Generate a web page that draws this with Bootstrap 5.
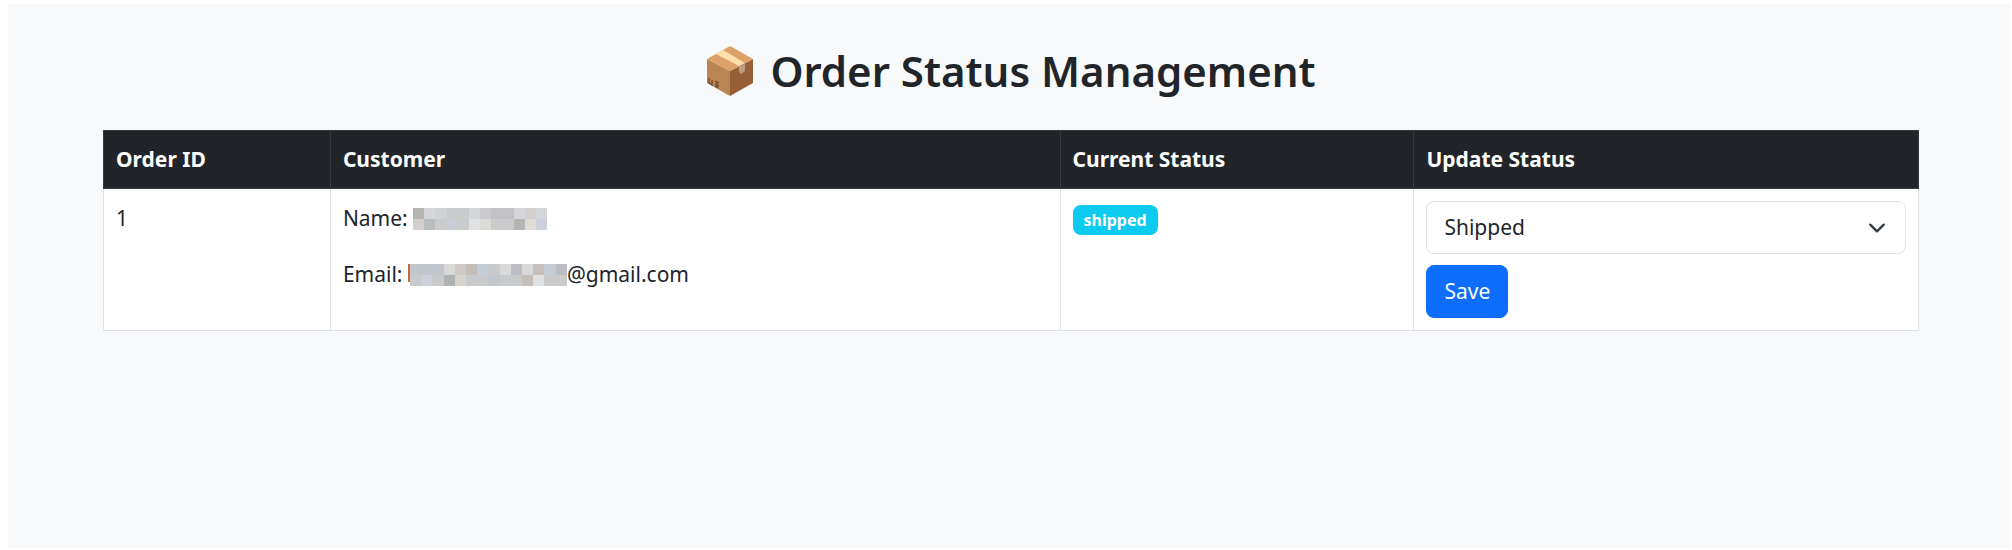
<!DOCTYPE html>
<html lang="en">
<head>
<meta charset="utf-8">
<meta name="viewport" content="width=device-width, initial-scale=1">
<title>Order Status Management</title>
<link href="https://cdn.jsdelivr.net/npm/bootstrap@5.3.0/dist/css/bootstrap.min.css" rel="stylesheet">
<style>
  body { font-family: "Noto Sans", sans-serif; font-size: 21px; line-height: 34px; background: #fff; }
  .page { margin: 4px 2px 2px 8px; padding: 40px 0 0 4px; min-height: calc(100vh - 6px); background: #f8f9fb; }
  .orders-wrap { max-width: 1850px; padding: 0 17px; }
  .page-title { font-size: 42px; line-height: 54px; font-weight: 600; gap: 16px; margin-bottom: 32px; }
  .box-icon { width: 48px; height: 50px; flex: none; }
  .orders > :not(caption) > * > * { padding: 12px; }
  .orders > thead > tr > th { padding: 11px 12px 12px; }
  .orders p { margin-bottom: 22px; }
  .col-id { width: 12.5%; }
  .col-customer { width: 40.2%; }
  .col-current { width: 19.5%; }
  .redacted { height: 22px; vertical-align: -4px; }
  .status-badge { font-size: 16px; line-height: 18px; padding: 6px 11px; border-radius: 8px; }
  .status-select { font-size: 21px; line-height: 33px; padding: 9px 50px 9px 17px; border-radius: 8px; background-size: 20px 18px; background-position: right 18px center; margin-bottom: 11px; }
  .save-btn { font-size: 21px; line-height: 33px; padding: 9px 17px; border-radius: 8px; }
</style>
</head>
<body>
<main class="page">
  <div class="orders-wrap mx-auto">
    <h2 class="page-title d-flex justify-content-center align-items-center">
      <svg class="box-icon" viewBox="0 0 48 50" aria-hidden="true">
        <path d="M1 13 24 25v25L1 37z" fill="#b98552"/>
        <path d="M24 25 47 13v24L24 50z" fill="#975f37"/>
        <path d="M24 0 47 13 24 25 1 13z" fill="#dca069"/>
        <path d="M17 4 39 17 33 20 10 8z" fill="#ffdfac"/>
        <path d="M33 20 39 17v8l-4 3-2-2z" fill="#bd9b80"/>
        <path d="M3 32v5l3 2v-5M9 35l4 2m-2-1v5m-2-3 4 2m-4 0 3 2" fill="none" stroke="#6d4b2c" stroke-width="1.3"/>
      </svg>
      <span>Order Status Management</span>
    </h2>
    <table class="table table-bordered orders bg-white mb-0">
      <thead class="table-dark">
        <tr>
          <th scope="col" class="col-id">Order ID</th>
          <th scope="col" class="col-customer">Customer</th>
          <th scope="col" class="col-current">Current Status</th>
          <th scope="col">Update Status</th>
        </tr>
      </thead>
      <tbody>
        <tr>
          <td>1</td>
          <td>
            <p>Name: <svg class="redacted" width="134" viewBox="0 0 12 2" preserveAspectRatio="none" shape-rendering="crispEdges" role="img" aria-label="Hidden name"><path fill="#cacbcc" d="M0 0h12v2H0z"/><path fill="#b5b5b4" d="M0 0h1v1H0zM9 1h1v1H9z"/><path fill="#d5d6d9" d="M1 0h1v1H1zM5 0h1v1H5zM9 0h1v1H9zM11 0h1v1h-1z"/><path fill="#d0d2d7" d="M2 0h1v1H2z"/><path fill="#c1c1c6" d="M7 0h1v1H7zM8 0h1v1H8z"/><path fill="#d3cfcd" d="M10 0h1v1h-1zM0 1h1v1H0z"/><path fill="#bcbebd" d="M1 1h1v1H1z"/><path fill="#cacdd5" d="M3 1h1v1H3z"/><path fill="#dfe1e3" d="M5 1h1v1H5z"/><path fill="#dadbd6" d="M6 1h1v1H6z"/><path fill="#e0dcd6" d="M10 1h1v1h-1z"/><path fill="#cad1dc" d="M11 1h1v1h-1z"/></svg></p>
            <p>Email: <svg class="redacted" width="159" viewBox="0 0 159 22" shape-rendering="crispEdges" role="img" aria-label="Hidden address"><path fill="#b9703c" d="M0 0h2v18H0z"/><g transform="translate(2) scale(11.2 11)"><path fill="#c9cacc" d="M0 0h14v2H0z"/><path fill="#c2c6cd" d="M0 0h3v1H0zM7 1h1v1H7z"/><path fill="#d9d9da" d="M3 0h1v1H3zM8 0h1v1H8zM10 0h1v1h-1z"/><path fill="#cfcac8" d="M4 0h1v1H4z"/><path fill="#c5bfba" d="M5 0h1v1H5zM11 0h1v1h-1zM10 1h1v1h-1z"/><path fill="#c5cdd6" d="M6 0h1v1H6zM12 0h1v1h-1z"/><path fill="#bdbec3" d="M9 0h1v1H9zM13 0h1v1h-1z"/><path fill="#cbd0da" d="M1 1h1v1H1z"/><path fill="#b1b2b4" d="M3 1h1v1H3z"/><path fill="#d7d3cd" d="M4 1h1v1H4z"/><path fill="#e0e1e3" d="M11 1h1v1h-1z"/></g></svg>@gmail.com</p>
          </td>
          <td><span class="badge bg-info status-badge">shipped</span></td>
          <td>
            <form onsubmit="return false">
              <select class="form-select status-select" aria-label="Update status">
                <option>Pending</option>
                <option>Processing</option>
                <option selected>Shipped</option>
                <option>Delivered</option>
              </select>
              <button type="submit" class="btn btn-primary save-btn d-block">Save</button>
            </form>
          </td>
        </tr>
      </tbody>
    </table>
  </div>
</main>
<script src="https://cdn.jsdelivr.net/npm/bootstrap@5.3.0/dist/js/bootstrap.bundle.min.js"></script>
</body>
</html>
